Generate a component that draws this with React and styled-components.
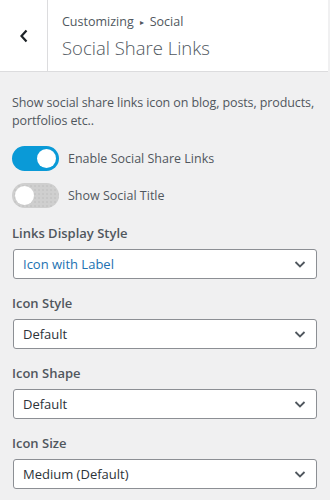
import React from "react";
import styled, { createGlobalStyle } from "styled-components";

const Global = createGlobalStyle`
  html, body { margin: 0; padding: 0; background: #f0f0f1; }
  body { font-family: "Open Sans", "Noto Sans", sans-serif; color: #50575e; }
  * { box-sizing: border-box; }
`;

const Panel = styled.div`
  width: 330px;
  height: 500px;
  display: flex;
  flex-direction: column;
  background: #f0f0f1;
  overflow: hidden;
`;

const Header = styled.header`
  display: flex;
  width: 328px;
  height: 72px;
  background: #fff;
  border-bottom: 1px solid #dcdcde;
  flex-shrink: 0;
`;

const BackButton = styled.button`
  width: 48px;
  border: none;
  border-right: 1px solid #dcdcde;
  background: #fff;
  padding: 0;
  display: flex;
  align-items: center;
  justify-content: center;
  color: #1d2327;
  cursor: pointer;
`;

const Titles = styled.div`
  display: flex;
  flex-direction: column;
  padding: 12px 0 0 14px;
`;

const Crumb = styled.div`
  font-size: 12.5px;
  line-height: 20px;
  color: #50575e;
  display: flex;
  align-items: center;
  gap: 6px;
`;

const Arrow = styled.span`
  font-size: 8px;
  color: #50575e;
`;

const Title = styled.h1`
  margin: 2px 0 0;
  font-size: 18.5px;
  font-weight: 300;
  line-height: 28px;
  color: #50575e;
`;

const Body = styled.div`
  width: 328px;
  padding: 22px 12px 0;
  display: flex;
  flex-direction: column;
`;

const Desc = styled.p`
  margin: 0;
  font-size: 12.5px;
  line-height: 18px;
  color: #50575e;
  letter-spacing: -0.1px;
`;

const ToggleRow = styled.label`
  display: flex;
  align-items: center;
  gap: 9px;
  margin-top: ${(p) => p.$mt}px;
  font-size: 12.5px;
  color: #50575e;
`;

const Track = styled.span`
  position: relative;
  width: 47px;
  height: 25px;
  border-radius: 13px;
  background-color: ${(p) => (p.$on ? "#0a9ad7" : "#cfcfcf")};
  background-image: ${(p) =>
    p.$on ? "none" : "radial-gradient(circle, #bdbdbd 0.6px, transparent 0.8px)"};
  background-size: 4px 4px;
  background-position: 1px 1px;
  flex-shrink: 0;
`;

const Knob = styled.span`
  position: absolute;
  top: 3px;
  left: ${(p) => (p.$on ? "25px" : "3px")};
  width: 19px;
  height: 19px;
  border-radius: 50%;
  background: #fff;
`;

const Field = styled.div`
  display: flex;
  flex-direction: column;
  margin-top: ${(p) => p.$mt}px;
`;

const Label = styled.div`
  font-size: 13px;
  font-weight: 600;
  line-height: 18px;
  color: #50575e;
  margin-bottom: 7px;
`;

const Select = styled.div`
  height: 30px;
  width: 304px;
  margin-left: 1px;
  border: 1px solid #8c8f94;
  border-radius: 3px;
  background: #fff;
  display: flex;
  align-items: center;
  justify-content: space-between;
  padding: 0 8px 0 9px;
  font-size: 13px;
  color: ${(p) => (p.$accent ? "#2271b1" : "#2c3338")};
`;

const Chevron = () => (
  <svg width="16" height="16" viewBox="0 0 16 16">
    <path d="M3.5 6 L8 10.5 L12.5 6" fill="none" stroke="#50575e" strokeWidth="1.8" />
  </svg>
);

const fields = [
  { label: "Links Display Style", value: "Icon with Label", accent: true, mt: 16 },
  { label: "Icon Style", value: "Default", mt: 15 },
  { label: "Icon Shape", value: "Default", mt: 15 },
  { label: "Icon Size", value: "Medium (Default)", mt: 15 },
];

export default function App() {
  return (
    <Panel>
      <Global />
      <Header>
        <BackButton aria-label="Back">
          <svg width="12" height="16" viewBox="0 0 12 16">
            <path d="M8.5 2.5 L3.5 8 L8.5 13.5" fill="none" stroke="#1d2327" strokeWidth="2.2" />
          </svg>
        </BackButton>
        <Titles>
          <Crumb>
            Customizing <Arrow>▸</Arrow> Social
          </Crumb>
          <Title>Social Share Links</Title>
        </Titles>
      </Header>
      <Body>
        <Desc>Show social share links icon on blog, posts, products, portfolios etc..</Desc>
        <ToggleRow $mt={16}>
          <Track $on>
            <Knob $on />
          </Track>
          Enable Social Share Links
        </ToggleRow>
        <ToggleRow $mt={12}>
          <Track>
            <Knob />
          </Track>
          Show Social Title
        </ToggleRow>
        {fields.map((f) => (
          <Field key={f.label} $mt={f.mt}>
            <Label>{f.label}</Label>
            <Select $accent={f.accent}>
              {f.value}
              <Chevron />
            </Select>
          </Field>
        ))}
      </Body>
    </Panel>
  );
}
